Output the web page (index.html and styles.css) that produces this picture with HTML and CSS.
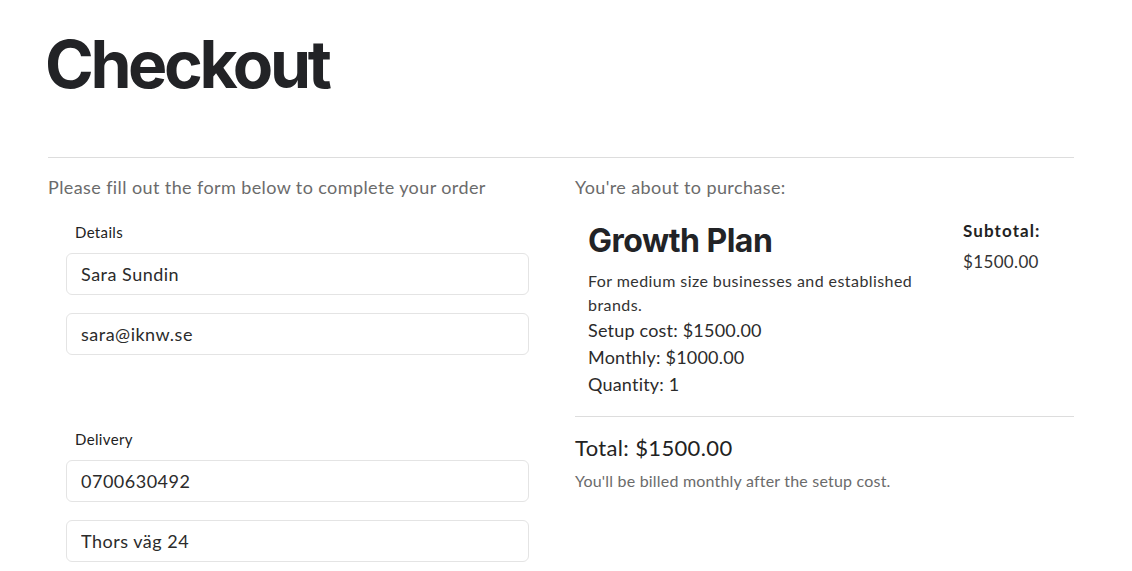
FILE: index.html
```html
<!DOCTYPE html>
<html lang="en">
<head>
<meta charset="utf-8">
<title>Checkout</title>
<link rel="stylesheet" href="styles.css">
</head>
<body>
<main class="page">
  <h1 class="title">Checkout</h1>
  <hr class="rule">
  <div class="columns">
    <section class="form-col">
      <p class="intro">Please fill out the form below to complete your order</p>
      <div class="group">
        <label class="group-label">Details</label>
        <input class="field" type="text" value="Sara Sundin">
        <input class="field" type="email" value="sara@iknw.se">
      </div>
      <div class="group group-delivery">
        <label class="group-label">Delivery</label>
        <input class="field" type="text" value="0700630492">
        <input class="field" type="text" value="Thors väg 24">
      </div>
    </section>
    <section class="summary-col">
      <p class="intro">You're about to purchase:</p>
      <div class="product">
        <div class="product-info">
          <h2 class="product-name">Growth Plan</h2>
          <p class="product-desc">For medium size businesses and established brands.</p>
          <p class="product-line">Setup cost: $1500.00</p>
          <p class="product-line">Monthly: $1000.00</p>
          <p class="product-line">Quantity: 1</p>
        </div>
        <div class="subtotal">
          <div class="subtotal-label">Subtotal:</div>
          <div class="subtotal-value">$1500.00</div>
        </div>
      </div>
      <hr class="rule rule-summary">
      <div class="total">Total: $1500.00</div>
      <p class="note">You'll be billed monthly after the setup cost.</p>
    </section>
  </div>
</main>
</body>
</html>
```

FILE: styles.css
```css
* { box-sizing: border-box; }
html, body { margin: 0; padding: 0; background: #fff; }
body {
  font-family: "Lato", "Open Sans", sans-serif;
  color: #222;
  letter-spacing: 0.35px;
}
.page {
  width: 1026px;
  margin-left: 48px;
}
.title {
  font-family: "Inter", "Lato", sans-serif;
  font-weight: 700;
  font-size: 66px;
  letter-spacing: -3.4px;
  line-height: 80px;
  margin: 24px 0 0 -3px;
  color: #222326;
}
.rule {
  border: 0;
  border-top: 1px solid #dddddd;
  margin: 53px 0 0;
}
.columns {
  display: grid;
  grid-template-columns: 499px 499px;
  column-gap: 28px;
}
.intro {
  margin: 18px 0 0;
  font-size: 18px;
  line-height: 22px;
  color: #6b6b6b;
  letter-spacing: 0.4px;
}
.group {
  padding: 0 18px;
  margin-top: 24px;
  display: flex;
  flex-direction: column;
}
.group-delivery { margin-top: 56px; }
.group-label {
  font-size: 15px;
  line-height: 20px;
  color: #222;
  padding-left: 9px;
  margin-bottom: 11px;
}
.field {
  height: 42px;
  border: 1px solid #e4e4e4;
  border-radius: 6px;
  padding: 0 14px;
  font-family: inherit;
  font-size: 18px;
  letter-spacing: 0.5px;
  color: #2b2b2b;
  background: #fff;
  margin-bottom: 18px;
  outline: none;
}
.product {
  display: flex;
  justify-content: space-between;
  padding: 23px 0 0 13px;
}
.product-info { width: 340px; }
.product-name {
  font-family: "Inter", "Lato", sans-serif;
  font-weight: 700;
  font-size: 32px;
  letter-spacing: -0.5px;
  line-height: 40px;
  margin: 0 0 8px;
  color: #222326;
}
.product-desc {
  margin: 0;
  font-size: 16px;
  line-height: 24px;
  color: #333;
  letter-spacing: 0.43px;
}
.product-line {
  margin: 0;
  font-size: 18px;
  line-height: 27px;
  color: #2b2b2b;
  letter-spacing: 0.2px;
}
.subtotal {
  width: 111px;
  margin-top: -3px;
}
.subtotal-label {
  font-weight: 700;
  font-size: 17px;
  letter-spacing: 1.1px;
  line-height: 26px;
  color: #222;
}
.subtotal-value {
  margin-top: 4px;
  font-size: 17px;
  line-height: 28px;
  color: #333;
}
.rule-summary { margin-top: 18px; }
.total {
  margin-top: 17px;
  font-size: 22px;
  line-height: 28px;
  color: #222;
}
.note {
  margin: 8px 0 0;
  font-size: 16px;
  line-height: 22px;
  color: #6b6b6b;
  letter-spacing: 0.2px;
}
```
